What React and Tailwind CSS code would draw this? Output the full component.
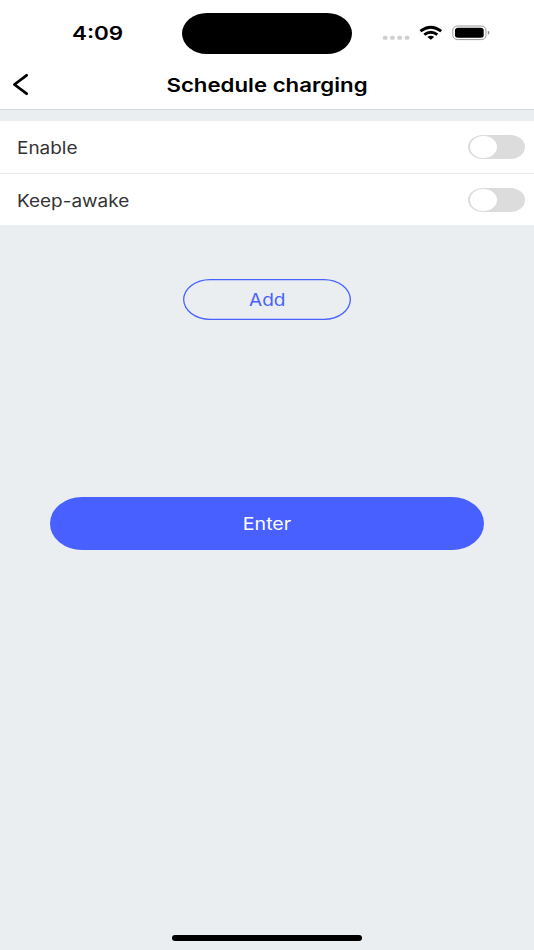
function StatusBar() {
  return (
    <div className="relative flex h-[60px]">
      <div className="flex h-[66px] w-[182px] items-center pl-[72px]">
        <span className="origin-left scale-x-[1.18] text-[19px] leading-none font-semibold">4:09</span>
      </div>
      <div className="mt-[13px] h-[41px] w-[170px] rounded-[25px/20.5px] bg-black" />
      <svg className="h-[60px] w-[182px]" viewBox="352 0 182 60" fill="none">
        <g fill="#cfcfcf">
          <rect x="382.8" y="35.8" width="4.8" height="4" rx="1.9" />
          <rect x="390" y="35.8" width="4.8" height="4" rx="1.9" />
          <rect x="397.3" y="35.8" width="4.8" height="4" rx="1.9" />
          <rect x="404.7" y="35.8" width="4.8" height="4" rx="1.9" />
        </g>
        <g stroke="#000" strokeWidth="2.8">
          <path d="M420.4 31.2Q430.8 23.3 441.2 31.2" />
          <path d="M424.3 34.7Q430.8 29.8 437.3 34.7" />
        </g>
        <path d="M427.4 36.9Q430.8 34.7 434.2 36.9L430.8 39.8Z" fill="#000" />
        <rect x="452.8" y="26" width="33.2" height="13.6" rx="4.7" ry="4.2" stroke="#999" />
        <rect x="455" y="27.8" width="28.7" height="10" rx="3" ry="2.5" fill="#000" />
        <path d="M487.8 30.8Q489.4 31.4 489.4 32.8Q489.4 34.2 487.8 34.8Z" fill="#888" />
      </svg>
    </div>
  );
}

function Row({ label, className }) {
  return (
    <div className={`flex items-center justify-between bg-white pr-[9px] pl-[17px] ${className}`}>
      <span className="origin-left scale-x-[1.115] pt-[2px] text-[17px] leading-none text-[#333]">{label}</span>
      <button className="flex h-[24.5px] w-[57px] items-center rounded-[15px/12.25px] bg-[#dcdcdc] pl-[2px]">
        <span className="h-[22px] w-[26.5px] rounded-[50%] bg-white" />
      </button>
    </div>
  );
}

export default function App() {
  return (
    <div className="flex h-[950px] w-[534px] flex-col overflow-hidden bg-[#eaeef1] font-['Inter',sans-serif] text-black">
      <header className="h-[110px] border-b border-[#d3d6d9] bg-white">
        <StatusBar />
        <div className="grid h-[49px] grid-cols-[40px_1fr_40px] items-center">
          <svg className="h-[49px] w-[40px]" viewBox="0 60 40 49" fill="none" stroke="#000" strokeWidth="2.8" strokeLinecap="round" strokeLinejoin="round">
            <path d="M26.6 75.3L14.4 84.5L26.6 93.7" />
          </svg>
          <h1 className="scale-x-[1.17] pt-px text-center text-[19px] leading-none font-semibold">Schedule charging</h1>
        </div>
      </header>
      <main className="flex flex-1 flex-col pt-[11px]">
        <Row label="Enable" className="h-[53px] border-b border-[#ebebeb]" />
        <Row label="Keep-awake" className="h-[51px] pt-px" />
        <button className="mt-[54px] flex h-[41px] w-[168px] items-center justify-center self-center rounded-[27px/20.5px] text-[#4860ff] shadow-[inset_0_0_0_1.3px_#4860ff]">
          <span className="scale-x-[1.12] pt-[2px] text-[17px] leading-none">Add</span>
        </button>
        <button className="mt-[177px] flex h-[53px] w-[434px] items-center justify-center self-center rounded-[32px/26.5px] bg-[#4860ff] text-white">
          <span className="scale-x-[1.15] pt-px text-[17px] leading-none">Enter</span>
        </button>
        <div className="mt-auto mb-[9px] h-[6px] w-[190px] self-center rounded-[3px] bg-black" />
      </main>
    </div>
  );
}
